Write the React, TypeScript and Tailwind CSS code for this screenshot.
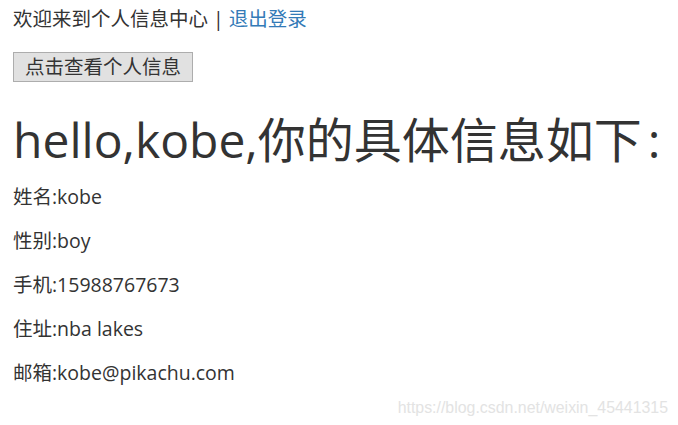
export default function App() {
  const info = [
    "姓名:kobe",
    "性别:boy",
    "手机:15988767673",
    "住址:nba lakes",
    "邮箱:kobe@pikachu.com",
  ]

  return (
    <div
      className="relative w-[678px] h-[425px] bg-white text-[#333] pl-[13px] overflow-hidden"
      style={{ fontFamily: '"Open Sans", "Noto Sans CJK SC", sans-serif' }}
    >
      {/* header line */}
      <div className="pt-[5px] text-[19.5px] leading-[28px]">
        欢迎来到个人信息中心 | <a className="text-[#337ab7]">退出登录</a>
      </div>

      <div className="mt-[19px]">
        <button className="block h-[30px] px-[11px] bg-[#e1e1e1] border border-[#adadad] text-[19.5px] leading-[26px] text-[#333]">
          点击查看个人信息
        </button>
      </div>

      <h1 className="mt-[32px] text-[48px] leading-[52px] font-normal whitespace-nowrap">
        hello,kobe,你的具体信息如下<span className="ml-[6px]">:</span>
      </h1>

      <div className="mt-[16px]">
        {info.map((line, i) => (
          <p key={i} className="text-[19.5px] leading-[30px] mb-[14px]">
            {line}
          </p>
        ))}
      </div>

      {/* watermark */}
      <div
        className="absolute right-[10px] top-[396px] text-[15.9px] text-[#e3e3e3]"
        style={{ fontFamily: '"Liberation Sans", sans-serif' }}
      >
        https://blog.csdn.net/weixin_45441315
      </div>
    </div>
  )
}
